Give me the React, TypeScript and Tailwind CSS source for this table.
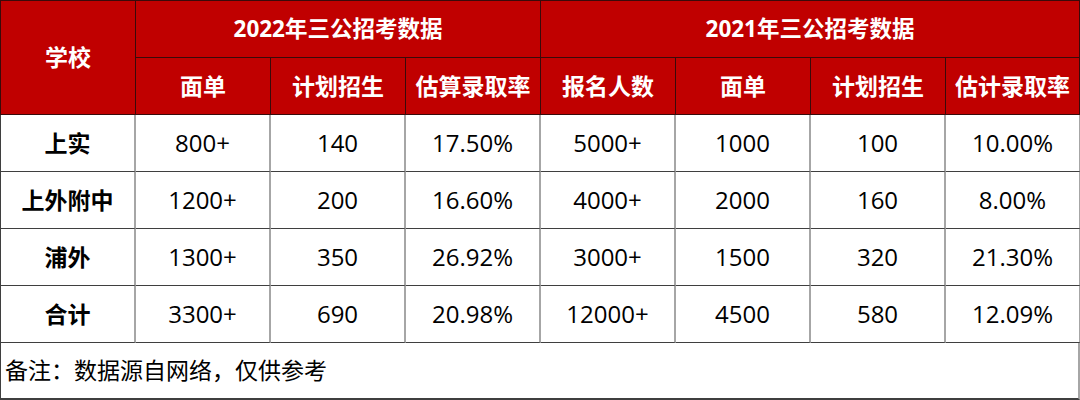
import React from "react";

const font = { fontFamily: '"Open Sans", "Noto Sans CJK SC", sans-serif' };

const rows = [
    ["上实", "800+", "140", "17.50%", "5000+", "1000", "100", "10.00%"],
    ["上外附中", "1200+", "200", "16.60%", "4000+", "2000", "160", "8.00%"],
    ["浦外", "1300+", "350", "26.92%", "3000+", "1500", "320", "21.30%"],
    ["合计", "3300+", "690", "20.98%", "12000+", "4500", "580", "12.09%"],
];

const subHeads = ["面单", "计划招生", "估算录取率", "报名人数", "面单", "计划招生", "估计录取率"];

const App = () => {
    return (
        <div className="w-[1080px] h-[400px] bg-white text-[23px] text-black" style={font}>
            <div className="grid grid-cols-[repeat(8,135px)] grid-rows-[57px_57px] bg-[#c00000] text-white font-bold border-t border-l border-[#3a0a0a]">
                <div className="row-span-2 flex items-center justify-center border-r border-b border-[#3a0a0a]">学校</div>
                <div className="col-span-3 flex items-center justify-center border-r border-b border-[#3a0a0a] text-[22.5px]">2022年三公招考数据</div>
                <div className="col-span-4 flex items-center justify-center border-r-2 border-b border-[#3a0a0a] text-[22.5px]">2021年三公招考数据</div>
                {subHeads.map((h, i) => (
                    <div key={i} className={`flex items-center justify-center border-b border-[#3a0a0a] ${i === subHeads.length - 1 ? "border-r-2" : "border-r"}`}>
                        {h}
                    </div>
                ))}
            </div>
            {rows.map((r, ri) => (
                <div key={ri} className="grid grid-cols-[repeat(8,135px)] h-[57px] border-l border-[#3f3f3f]">
                    {r.map((c, ci) => (
                        <div
                            key={ci}
                            className={`flex items-center justify-center border-b border-b-[#3f3f3f] border-r-2 border-r-[#a6a6a6] ${ci === 0 ? "font-bold" : "text-[24px]"}`}
                        >
                            {c}
                        </div>
                    ))}
                </div>
            ))}
            <div className="h-[57px] flex items-center pl-[4px] border-l border-r-2 border-b-2 border-l-[#3f3f3f] border-r-[#a6a6a6] border-b-[#3f3f3f]">
                备注：数据源自网络，仅供参考
            </div>
        </div>
    );
};

export default App;
